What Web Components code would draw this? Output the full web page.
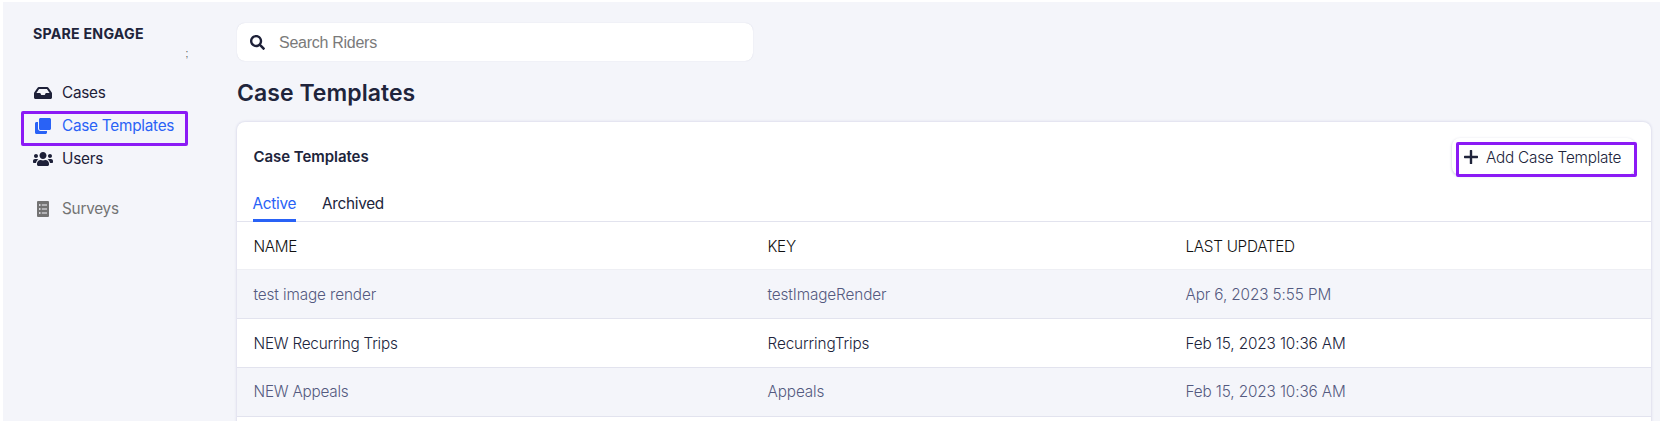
<!DOCTYPE html>
<html lang="en">
<head>
<meta charset="utf-8">
<title>Case Templates</title>
<style>
html,body{margin:0;height:424px;overflow:hidden;background:#fff}
body{font-family:Inter,"Liberation Sans",sans-serif;font-size:15.3px;color:#20243b}
</style>
</head>
<body>
<engage-app></engage-app>
<script>
const define=(name,html)=>{
  const t=document.createElement('template');
  t.innerHTML=html;
  customElements.define(name,class extends HTMLElement{
    constructor(){super();this.attachShadow({mode:'open'}).append(t.content.cloneNode(true));}
  });
};
const ICONS={
  inbox:['0 64 576 384','M567.938 243.908L462.25 85.374A48.003 48.003 0 0 0 422.311 64H153.689a48 48 0 0 0-39.938 21.374L8.062 243.908A47.994 47.994 0 0 0 0 270.533V400c0 26.51 21.49 48 48 48h480c26.51 0 48-21.49 48-48V270.533a47.994 47.994 0 0 0-8.062-26.625zM162.252 128h251.497l85.333 128H376l-32 64H232l-32-64H76.918l85.334-128z'],
  clone:['0 0 512 512','M464 0c26.51 0 48 21.49 48 48v288c0 26.51-21.49 48-48 48H176c-26.51 0-48-21.49-48-48V48c0-26.51 21.49-48 48-48h288M176 416c-44.112 0-80-35.888-80-80V128H48c-26.51 0-48 21.49-48 48v288c0 26.51 21.49 48 48 48h288c26.51 0 48-21.49 48-48v-48H176z'],
  users:['0 32 640 448','M96 224c35.3 0 64-28.7 64-64s-28.7-64-64-64-64 28.7-64 64 28.7 64 64 64zm448 0c35.3 0 64-28.7 64-64s-28.7-64-64-64-64 28.7-64 64 28.7 64 64 64zm32 32h-64c-17.6 0-33.5 7.1-45.1 18.6 40.3 22.1 68.9 62 75.1 109.4h66c17.7 0 32-14.3 32-32v-32c0-35.3-28.7-64-64-64zm-256 0c61.9 0 112-50.1 112-112S381.9 32 320 32 208 82.1 208 144s50.1 112 112 112zm76.8 32h-8.3c-20.8 10-43.9 16-68.5 16s-47.6-6-68.5-16h-8.3C179.6 288 128 339.6 128 403.2V432c0 26.5 21.5 48 48 48h288c26.5 0 48-21.5 48-48v-28.8c0-63.6-51.6-115.2-115.2-115.2zm-223.7-13.4C161.5 263.1 145.6 256 128 256H64c-35.3 0-64 28.7-64 64v32c0 17.7 14.3 32 32 32h65.9c6.3-47.4 34.9-87.3 75.2-109.4z'],
  survey:['0 0 12 16','M1 0H11Q12 0 12 1V15Q12 16 11 16H1Q0 16 0 15V1Q0 0 1 0ZM2 3.2V4.8H3.5V3.2ZM4.8 3.5V4.5H10V3.5ZM2 7.2V8.8H3.5V7.2ZM4.8 7.5V8.5H10V7.5ZM2 11.2V12.8H3.5V11.2ZM4.8 11.5V12.5H10V11.5Z'],
  search:['0 0 512 512','M505 442.7L405.3 343c-4.5-4.5-10.6-7-17-7H372c27.6-35.3 44-79.7 44-128C416 93.1 322.9 0 208 0S0 93.1 0 208s93.1 208 208 208c48.3 0 92.7-16.4 128-44v16.3c0 6.4 2.5 12.5 7 17l99.7 99.7c9.4 9.4 24.6 9.4 33.9 0l28.3-28.3c9.4-9.4 9.4-24.6.1-34zM208 336c-70.7 0-128-57.2-128-128 0-70.7 57.2-128 128-128 70.7 0 128 57.2 128 128 0 70.7-57.2 128-128 128z'],
  plus:['0 0 14 14','M5.8 .6Q5.8 0 6.4 0H7.6Q8.2 0 8.2 .6V5.8H13.4Q14 5.8 14 6.4V7.6Q14 8.2 13.4 8.2H8.2V13.4Q8.2 14 7.6 14H6.4Q5.8 14 5.8 13.4V8.2H.6Q0 8.2 0 7.6V6.4Q0 5.8 .6 5.8H5.8Z']
};
customElements.define('engage-icon',class extends HTMLElement{
  constructor(){super();this.attachShadow({mode:'open'});}
  connectedCallback(){
    const [box,d]=ICONS[this.getAttribute('name')];
    this.shadowRoot.innerHTML=`<style>:host{display:block;flex:none}svg{display:block;width:100%;height:100%}</style><svg viewBox="${box}" fill="currentColor" fill-rule="evenodd"><path d="${d}"/></svg>`;
  }
});
define('nav-item',`<style>
:host{display:flex;align-items:center;height:33.3px;color:#1d2038;line-height:20px;white-space:nowrap;font-size:15.3px;letter-spacing:-.24px}
:host([active]){color:#2962f6}
:host([muted]){color:#737373}
.icon{width:20px;margin-right:9px;display:flex;justify-content:center}
</style><span class="icon"><slot name="icon"></slot></span><slot></slot>`);
define('side-nav',`<style>
:host{display:block;box-sizing:border-box;padding:22px 0 0 30px;position:relative}
.brand{font-size:14.2px;letter-spacing:.22px;font-weight:650;line-height:19px;height:52px}
.survey{margin-top:16px}
.mark{position:absolute;left:182.5px;top:46px;font:10px/12px "Liberation Sans",sans-serif;color:#555}
.ring{position:absolute;left:18px;top:109px;width:161px;height:29px;border:3px solid #8b1af5;border-radius:2px}
</style>
<div class="brand">SPARE ENGAGE</div>
<nav-item><engage-icon slot="icon" name="inbox" style="width:18px;height:12px"></engage-icon>Cases</nav-item>
<nav-item active><engage-icon slot="icon" name="clone" style="width:16px;height:16px"></engage-icon>Case Templates</nav-item>
<nav-item><engage-icon slot="icon" name="users" style="width:20px;height:14px"></engage-icon>Users</nav-item>
<nav-item muted class="survey"><engage-icon slot="icon" name="survey" style="width:12px;height:16px"></engage-icon>Surveys</nav-item>
<span class="mark">;</span><div class="ring"></div>`);
define('search-box',`<style>
:host{display:flex;align-items:center;box-sizing:border-box;width:515.5px;height:38px;padding-left:13px;background:#fff;border-radius:8px;box-shadow:0 0 1px #c9cbdc;font:16px/20px "Liberation Sans",sans-serif;letter-spacing:-.27px;color:#7a7a7a}
engage-icon{width:15px;height:15px;color:#1d2038;margin-right:14px}
span{padding-top:2px}
</style><engage-icon name="search"></engage-icon><span><slot></slot></span>`);
define('add-button',`<style>
:host{display:flex;align-items:center;position:relative;box-sizing:border-box;width:183px;height:37px;padding-left:12px;border-radius:8px;box-shadow:0 1px 3px #c3c5d8;font-size:15.3px;font-weight:350;letter-spacing:-.22px;white-space:nowrap}
engage-icon{width:14px;height:14px;margin-right:8px}
span{padding-top:1px}
.ring{position:absolute;left:4px;top:4px;width:175px;height:29px;border:3px solid #8b1af5;border-radius:2px}
</style><engage-icon name="plus"></engage-icon><span><slot></slot></span><div class="ring"></div>`);
define('tab-bar',`<style>
:host{display:flex;gap:26px;height:40px;padding-left:15.5px;border-bottom:1px solid #e2e3ee;letter-spacing:-.28px}
span{line-height:45px;height:41px;box-sizing:border-box}
.on{color:#2962f6;border-bottom:3px solid #2962f6}
</style><span class="on">Active</span><span>Archived</span>`);
define('table-row',`<style>
:host{display:grid;grid-template-columns:514px 418px 1fr;align-items:center;box-sizing:border-box;height:48.9px;padding:2.2px 0 0 16.5px;border-bottom:1px solid #e2e3ee;font-weight:350;font-size:15.3px;letter-spacing:-.11px;line-height:20px}
:host([head]){height:48px;padding-top:2px;color:#111;border-color:#eeeff4;letter-spacing:-.3px}
:host([alt]){background:#f4f5fa;color:#545a80}
:host([last]){padding-top:1px}
</style><slot></slot>`);
define('template-card',`<style>
:host{display:block;background:#fff;border-radius:8px 8px 0 0;box-shadow:0 0 3px #c9cae0}
.top{display:flex;justify-content:space-between;height:59px;padding:0 16px 0 16.5px}
.title{font-size:15px;font-weight:600;letter-spacing:-.05px;line-height:70px}
add-button{margin-top:16px}
</style>
<div class="top"><span class="title">Case Templates</span><add-button>Add Case Template</add-button></div>
<tab-bar></tab-bar>
<table-row head><span>NAME</span><span>KEY</span><span>LAST UPDATED</span></table-row>
<table-row alt><span>test image render</span><span>testImageRender</span><span>Apr 6, 2023 5:55 PM</span></table-row>
<table-row><span style="letter-spacing:-.22px">NEW Recurring Trips</span><span>RecurringTrips</span><span>Feb 15, 2023 10:36 AM</span></table-row>
<table-row alt last><span style="letter-spacing:-.22px">NEW Appeals</span><span>Appeals</span><span>Feb 15, 2023 10:36 AM</span></table-row>`);
define('engage-app',`<style>
:host{display:grid;grid-template-columns:234px 1fr;box-sizing:border-box;margin:0 0 0 3px;height:421px;border-top:2px solid #fff;background:#f4f5fa;overflow:hidden}
main{padding:21px 9px 0 0}
h1{margin:15px 0 0;font-size:23px;letter-spacing:.05px;line-height:34px;height:46px;font-weight:600}
template-card{height:320px}
</style><side-nav></side-nav><main><search-box>Search Riders</search-box><h1>Case Templates</h1><template-card></template-card></main>`);
</script>
</body>
</html>
